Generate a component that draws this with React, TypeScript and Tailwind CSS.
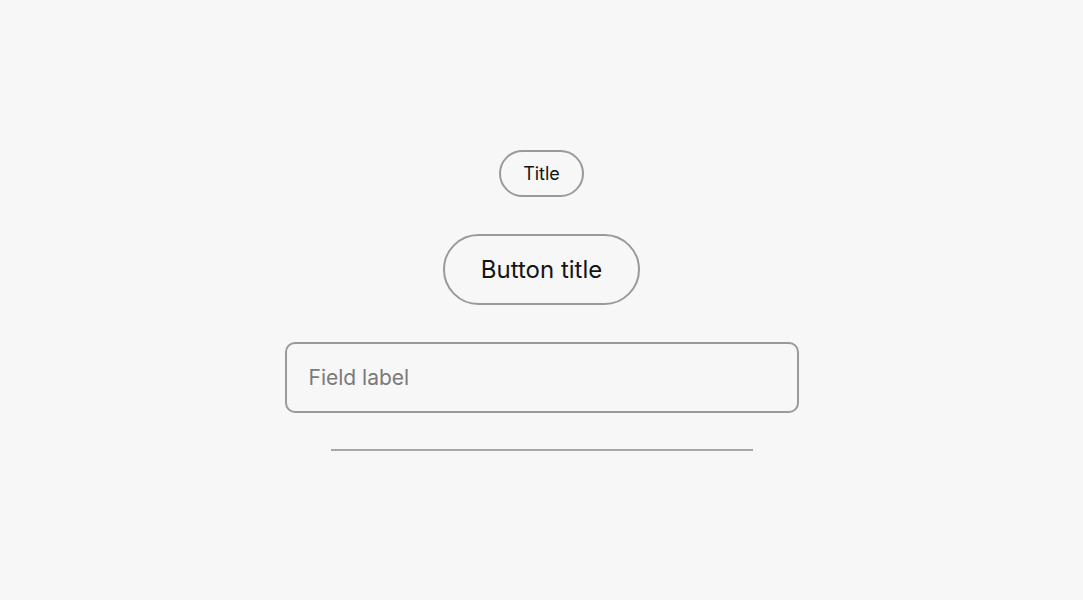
export default function App() {
  return (
    <div
      className="w-full h-[600px] bg-[#f7f7f7] flex flex-col items-center justify-center gap-[37px] pt-[1px]"
      style={{ fontFamily: "Inter, 'Noto Sans', sans-serif" }}
    >
      <div className="w-[85px] h-[47px] rounded-full border-2 border-[#9a9a9a] flex items-center justify-center text-[18px] text-[#141414]">
        Title
      </div>
      <div className="w-[197px] h-[71px] rounded-full border-2 border-[#9a9a9a] flex items-center justify-center text-[24px] text-[#141414]">
        Button title
      </div>
      <div className="w-[514px] h-[71px] rounded-[10px] border-2 border-[#9a9a9a] flex items-center px-[22px] text-[21px] text-[#7a7a7a]">
        Field label
      </div>
      <div className="w-[422px] h-[2px] bg-[#a6a6a6] -mt-[1px]" />
    </div>
  );
}
